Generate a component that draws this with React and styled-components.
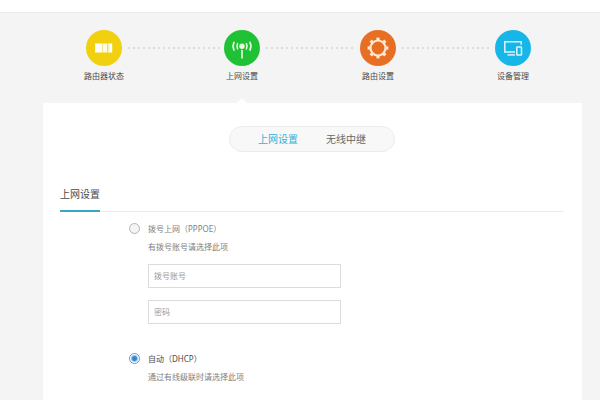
import styled, { createGlobalStyle } from 'styled-components'
import { useState } from 'react'

var colors = {
  page: '#f4f4f4',
  line: '#ebebeb',
  text: '#4a4a4a',
  muted: '#808080',
  accent: '#2eb3d8',
  yellow: '#f1d010',
  green: '#1fc234',
  orange: '#e86e24',
  blue: '#16b6e8',
}

var GlobalStyle = createGlobalStyle`
  * {
    box-sizing: border-box;
  }
  body {
    margin: 0;
    background: ${colors.page};
    color: ${colors.text};
    font: 8px/12px 'Noto Sans', 'Noto Sans CJK SC', sans-serif;
  }
  button,
  input {
    font: inherit;
  }
`
var Page = styled.div`
  display: flex;
  flex-direction: column;
  min-height: 100vh;
`
var TopBar = styled.header`
  height: 13px;
  background: #fff;
  border-bottom: 1px solid ${colors.line};
`
var Steps = styled.nav`
  display: flex;
  padding: 17px 65px 0 82px;
`
var Step = styled.a`
  position: relative;
  display: flex;
  flex-direction: column;
  align-items: center;
  gap: 4px;
  width: 44px;
  height: 73px;
  color: ${colors.text};
  text-decoration: none;
  white-space: nowrap;

  &[aria-current]::after {
    content: '';
    position: absolute;
    bottom: 0;
    border: 5px solid transparent;
    border-top: 0;
    border-bottom-color: #fff;
  }
`
var StepIcon = styled.span`
  display: flex;
  width: 36px;
  height: 36px;
  border-radius: 50%;
  background: ${({ $color }) => $color};

  svg {
    width: 36px;
    height: 36px;
  }
`
var Dots = styled.span`
  flex: ${({ $grow }) => $grow} 1 0;
  height: 2px;
  margin: 17px 0 0 2px;
  background: repeating-linear-gradient(
    to right,
    #dcdcdc 0 2px,
    transparent 2px 5px
  );
`
var Panel = styled.main`
  flex: 1;
  margin: 0 18px 0 43px;
  padding: 23px 18px 12px 17px;
  background: #fff;
`
var Tabs = styled.div`
  display: flex;
  justify-content: center;
  gap: 28px;
  width: fit-content;
  margin: 0 auto;
  padding: 0 28px;
  border: 1px solid #ececec;
  border-radius: 13px;
  background: #f8f8f8;
`
var Tab = styled.button`
  padding: 0;
  border: 0;
  background: none;
  font-size: 10px;
  line-height: 24px;
  color: ${({ $active }) => ($active ? colors.accent : '#666')};
`
var SectionHead = styled.div`
  display: flex;
  margin-top: 34px;
  box-shadow: inset 0 -1px ${colors.line};
`
var SectionTitle = styled.h2`
  margin: 0;
  padding-bottom: 8px;
  border-bottom: 2px solid #35a9c4;
  font-size: 10px;
  font-weight: 400;
  line-height: 16px;
`
var Modes = styled.form`
  display: grid;
  gap: 29px;
  padding: 11px 69px 0;
`
var Mode = styled.div`
  display: grid;
  grid-template-columns: 11px minmax(0, 193px);
  column-gap: 8px;
`
var Radio = styled.input`
  appearance: none;
  width: 11px;
  height: 11px;
  margin: 0;
  border: 1px solid #b4b4b4;
  border-radius: 50%;
  background: #f4f4f4;

  &:checked {
    border-color: #5a9bd0;
    background: radial-gradient(circle, #3489d2 0 2px, #fff 4px);
  }
`
var ModeName = styled.label`
  color: ${({ $active }) => ($active ? colors.text : colors.muted)};
`
var Hint = styled.p`
  grid-column: 2;
  margin: 6px 0 0;
  color: ${colors.muted};
`
var Fields = styled.div`
  grid-column: 2;
  display: grid;
  gap: 12px;
  margin-top: 11px;
`
var Field = styled.input`
  width: 100%;
  height: 24px;
  padding: 0 5px 2px;
  border: 1px solid #dcdcdc;
  border-radius: 0;
  background: #fff;
  color: ${colors.text};

  &::placeholder {
    color: #999;
  }
`

function StatusIcon() {
  return (
    <svg viewBox="0 0 36 36" fill="#fff">
      <path d="M9 13.5h7.5v9H9z" />
      <path d="M17 13.5h4.2v9H17z" opacity=".9" />
      <path d="M21.9 13.5h4.3v9h-4.3z" />
      <path d="M22.8 14.5v7" stroke="#f1d010" strokeWidth=".5" />
    </svg>
  )
}

function SignalIcon() {
  return (
    <svg
      viewBox="0 0 36 36"
      fill="none"
      stroke="#e6fbe0"
      strokeWidth="1.6"
      strokeLinecap="round"
    >
      <circle cx="18" cy="16.2" r="2.7" fill="#e6fbe0" stroke="none" />
      <path d="M18 20.5v7.5" />
      <path d="M13.6 13.6a5.4 5.4 0 0 0 0 5.2M22.4 13.6a5.4 5.4 0 0 1 0 5.2" />
      <path d="M10 12.3a8.6 8.6 0 0 0 0 7.8M26 12.3a8.6 8.6 0 0 1 0 7.8" />
    </svg>
  )
}

function GearIcon() {
  var teeth = [0, 45, 90, 135, 180, 225, 270, 315]
  return (
    <svg viewBox="0 0 36 36" fill="none" stroke="#ffe9d2">
      <circle cx="18" cy="18" r="7.5" strokeWidth="2.2" />
      {teeth.map((angle) => (
        <path
          key={angle}
          d="M16.4 8.9h3.2"
          strokeWidth="2.6"
          transform={`rotate(${angle} 18 18)`}
        />
      ))}
    </svg>
  )
}

function DevicesIcon() {
  return (
    <svg viewBox="0 0 36 36" fill="none" stroke="#d9f8fd" strokeWidth="1.5">
      <path d="M20 22H9.8V11.7h16.4v3" />
      <path d="M12.5 24.9H20" />
      <rect x="21.8" y="17" width="4.7" height="8" rx=".6" />
    </svg>
  )
}

function App() {
  var [tab, setTab] = useState('上网设置')
  var [mode, setMode] = useState('dhcp')

  return (
    <Page lang="zh-CN">
      <GlobalStyle />
      <TopBar />
      <Steps>
        <Step href="#status">
          <StepIcon $color={colors.yellow}>
            <StatusIcon />
          </StepIcon>
          路由器状态
        </Step>
        <Dots $grow={94} />
        <Step href="#network" aria-current="page">
          <StepIcon $color={colors.green}>
            <SignalIcon />
          </StepIcon>
          上网设置
        </Step>
        <Dots $grow={92} />
        <Step href="#router">
          <StepIcon $color={colors.orange}>
            <GearIcon />
          </StepIcon>
          路由设置
        </Step>
        <Dots $grow={91} />
        <Step href="#devices">
          <StepIcon $color={colors.blue}>
            <DevicesIcon />
          </StepIcon>
          设备管理
        </Step>
      </Steps>

      <Panel>
        <Tabs>
          {['上网设置', '无线中继'].map((name) => (
            <Tab
              key={name}
              type="button"
              $active={tab === name}
              onClick={() => setTab(name)}
            >
              {name}
            </Tab>
          ))}
        </Tabs>

        <SectionHead>
          <SectionTitle>上网设置</SectionTitle>
        </SectionHead>

        <Modes>
          <Mode>
            <Radio
              type="radio"
              name="mode"
              id="pppoe"
              checked={mode === 'pppoe'}
              onChange={() => setMode('pppoe')}
            />
            <ModeName htmlFor="pppoe" $active={mode === 'pppoe'}>
              拨号上网（PPPOE）
            </ModeName>
            <Hint>有拨号账号请选择此项</Hint>
            <Fields>
              <Field type="text" placeholder="拨号账号" aria-label="拨号账号" />
              <Field type="password" placeholder="密码" aria-label="密码" />
            </Fields>
          </Mode>
          <Mode>
            <Radio
              type="radio"
              name="mode"
              id="dhcp"
              checked={mode === 'dhcp'}
              onChange={() => setMode('dhcp')}
            />
            <ModeName htmlFor="dhcp" $active={mode === 'dhcp'}>
              自动（DHCP）
            </ModeName>
            <Hint>通过有线级联时请选择此项</Hint>
          </Mode>
        </Modes>
      </Panel>
    </Page>
  )
}

export default App
